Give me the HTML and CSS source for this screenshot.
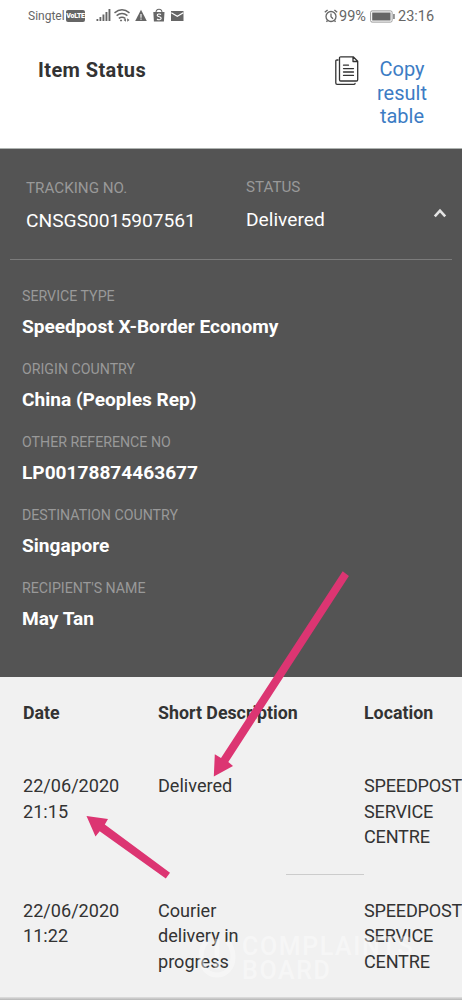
FILE: index.html
```html
<!DOCTYPE html>
<html lang="en">
<head>
<meta charset="utf-8">
<title>Item Status</title>
<link rel="stylesheet" href="styles.css">
</head>
<body>
<div class="screen">
  <div class="statusbar">
    <span class="carrier">Singtel</span>
    <span class="volte">VoLTE</span>
    <svg class="signals" width="88" height="16" viewBox="0 0 88 16" fill="#666">
      <path d="M.5 11h1.8v2H.5zM3.5 9h1.8v4H3.500zM6.500 6.500h1.900V13H6.500zM9.500 4h1.900v9H9.500zM12.500 1h1.900v12h-1.900z"/>
      <g fill="none" stroke="#666" stroke-width="1.500"><path d="M18.500 4.800q7.500-6 15 0M20.600 7.600q5.400-4.200 10.800 0M22.800 10.300q3.200-2.300 6.400 0"/></g>
      <path d="M25 11.200l1.300 1.600-1.300.8-1.200-.8zM27.600 12l2.300-1.800v3.600zM33.500 12l-2.300-1.800v3.600z"/>
      <path d="M45 1.700 50.800 13H39.200z"/><path d="M44.300 6h1.400v3.700h-1.400zM44.300 10.500h1.400v1.300h-1.400z" fill="#ddd"/>
      <path d="M57.300 4h11.200l-.6 9.500h-10z"/><path d="M60 4.500c0-4.400 6-4.400 6 0" fill="none" stroke="#666" stroke-width="1.100"/>
      <path d="M65 6.500c-1-.8-3.800-.8-3.800.8 0 1.800 4 1.100 4 3 0 1.700-3 1.800-4.200.7" fill="none" stroke="#fff" stroke-width="1.100"/>
      <path d="M75 3h12.500v10H75z"/><path d="m75.300 4.800 6 3.500 6-3.500" fill="none" stroke="#fff" stroke-width="1.200"/>
    </svg>
    <span class="spacer"></span>
    <svg class="alarm" width="14" height="14" viewBox="0 0 14 14" fill="none" stroke="#666" stroke-width="1.300"><circle cx="7" cy="7.500" r="5"/><path d="M.8 3.300 3.600.9M13.200 3.300 10.400.9M7 4.600v3.200l2 1.900M3.500 11.500l-1 1.300M10.500 11.500l1 1.300"/></svg>
    <span class="percent">99%</span>
    <svg class="battery" width="25" height="13" viewBox="0 0 25 13"><rect x=".6" y=".9" width="21.500" height="11.200" rx="1.500" fill="#fff" stroke="#999"/><path d="M2.200 2.500h18.300v8H2.200z" fill="#666"/><path d="M23.200 4h1.500v5h-1.500z" fill="#777"/></svg>
    <span class="clock">23:16</span>
  </div>
  <header class="header">
    <h1 class="title">Item Status</h1>
    <svg class="copy-icon" width="24" height="30" viewBox="0 0 24 30" fill="none" stroke="#333" stroke-width="1.300" stroke-linejoin="round" stroke-linecap="round">
      <path d="M4.500 2q0-1.200 1.200-1.200h12.500l4.500 4.400v18.600q0 1.200-1.200 1.200H5.700q-1.200 0-1.200-1.200zM18 1v4.500h4.500M3 4H2Q.800 4 .800 5.200V27q0 1.300 1.300 1.300h17q1 0 1-1M8.500 9.200h5M8.500 12.600h10M8.500 16h10M8.500 19.400h10"/>
    </svg>
    <a class="copy-link">Copy<br>result<br>table</a>
  </header>
  <section class="summary">
    <div class="top">
      <div class="cell tracking"><div class="label">TRACKING NO.</div><div class="number">CNSGS0015907561</div></div>
      <div class="cell state"><div class="label">STATUS</div><div class="number">Delivered</div></div>
      <svg class="chevron" width="14" height="10" viewBox="0 0 14 10" fill="none" stroke="#e4e4e4" stroke-width="2.600"><path d="M1.800 8.300 7 2.600l5.200 5.700"/></svg>
    </div>
    <dl class="details">
      <dt>SERVICE TYPE</dt><dd>Speedpost X-Border Economy</dd>
      <dt>ORIGIN COUNTRY</dt><dd>China (Peoples Rep)</dd>
      <dt>OTHER REFERENCE NO</dt><dd>LP00178874463677</dd>
      <dt>DESTINATION COUNTRY</dt><dd>Singapore</dd>
      <dt>RECIPIENT'S NAME</dt><dd>May Tan</dd>
    </dl>
  </section>
  <section class="events">
    <div class="row head"><div>Date</div><div>Short Description</div><div>Location</div></div>
    <div class="row"><div>22/06/2020<br>21:15</div><div>Delivered</div><div class="place">SPEEDPOST<br>SERVICE<br>CENTRE</div></div>
    <div class="rule"></div>
    <div class="row"><div>22/06/2020<br>11:22</div><div>Courier<br>delivery in<br>progress</div><div class="place">SPEEDPOST<br>SERVICE<br>CENTRE</div></div>
  </section>
  <div class="edge"></div>
  <div class="watermark">
    <svg width="38" height="50" viewBox="0 0 38 50" fill="none" stroke="#fff" stroke-width="5"><path d="M9 9Q3 15 3 25c0 24 32 24 32 0Q35 15 29 9"/><path d="M19 7v19M19 31v6"/></svg>
    <div class="mark-text">COMPLAINTS<br>BOARD</div>
  </div>
  <svg class="arrows" width="462" height="1000" viewBox="0 0 462 1000" fill="#dc3572">
    <path d="M342.700 571.300 348.900 576 228.300 762 233 766 213.800 776.500 214.800 754.300 221 758z"/>
    <path d="M86.500 816 108 819 104.800 824.500 170 872.800 165.800 878.500 99.700 831.300 95.500 836.500z"/>
  </svg>
</div>
</body>
</html>
```
FILE: styles.css
```css
* { box-sizing: border-box; }
body { margin: 0; background: #fff; font-family: Roboto, "Liberation Sans", sans-serif; color: #333; }
.screen { position: relative; width: 462px; height: 1000px; overflow: hidden; display: flex; flex-direction: column; }
.statusbar { height: 32px; display: flex; align-items: center; padding: 0 28px; color: #666; flex: none; }
.carrier { font-size: 12px; width: 38px; white-space: nowrap; }
.volte { width: 19px; height: 12px; border-radius: 2px; background: #666; color: #fff; font-size: 7px; font-weight: 900; line-height: 12px; text-align: center; letter-spacing: -.3px; }
.signals { margin-left: 11px; }
.spacer { flex: 1; }
.percent { font-size: 14.500px; width: 30px; white-space: nowrap; }
.alarm { margin-right: 1px; }
.battery { margin-left: 1px; }
.clock { font-size: 14.500px; width: 36px; margin-left: 3px; white-space: nowrap; }
.header { height: 117px; flex: none; display: flex; align-items: flex-start; padding: 24px 0 0 38px; border-bottom: 1px solid #aeb3b0; }
.title { margin: 2px 0 0; width: 297px; font-size: 20px; line-height: 24px; font-weight: 700; letter-spacing: .4px; }
.copy-link { width: 62px; margin-left: 12px; margin-top: 2px; text-align: center; font-size: 20px; line-height: 23.500px; color: #3c7cc4; }
.summary { height: 528px; flex: none; background: #545454; color: #fff; padding: 0 10px; }
.top { height: 111px; display: flex; border-bottom: 1px solid #7b7b7b; padding-left: 16px; }
.cell { width: 220px; padding-top: 27px; }
.state { padding-top: 26px; width: 187px; }
.label, dt { font-size: 15.200px; line-height: 24px; color: #999; }
.number { font-size: 19.200px; line-height: 28px; margin-top: 7px; }
.chevron { margin-top: 59px; }
.details { margin: 24px 0 0 12px; }
dt { font-size: 14.200px; }
dd { margin: 4px 0 15px; font-size: 19.100px; line-height: 30px; font-weight: 700; }
.events { height: 320px; flex: none; background: #f1f1f1; font-size: 18.100px; line-height: 25.500px; padding: 23px 0 0 23px; }
.row { display: grid; grid-template-columns: 135px 206px 98px; white-space: nowrap; }
.head { font-weight: 700; font-size: 17.800px; height: 73px; }
.place { letter-spacing: -.2px; }
.rule { width: 78px; height: 1px; margin: 24px 0 23px 263px; background: #ccc; }
.edge { height: 3px; flex: none; background: linear-gradient(#e0e0e0, #b5b5b5); }
.watermark { position: absolute; left: 198px; top: 932px; display: flex; gap: 6px; opacity: .4; color: #fff; }
.mark-text { font-size: 25px; line-height: 24px; font-weight: 500; padding-top: 3px; letter-spacing: 1.600px; }
.arrows { position: absolute; left: 0; top: 0; }
```
